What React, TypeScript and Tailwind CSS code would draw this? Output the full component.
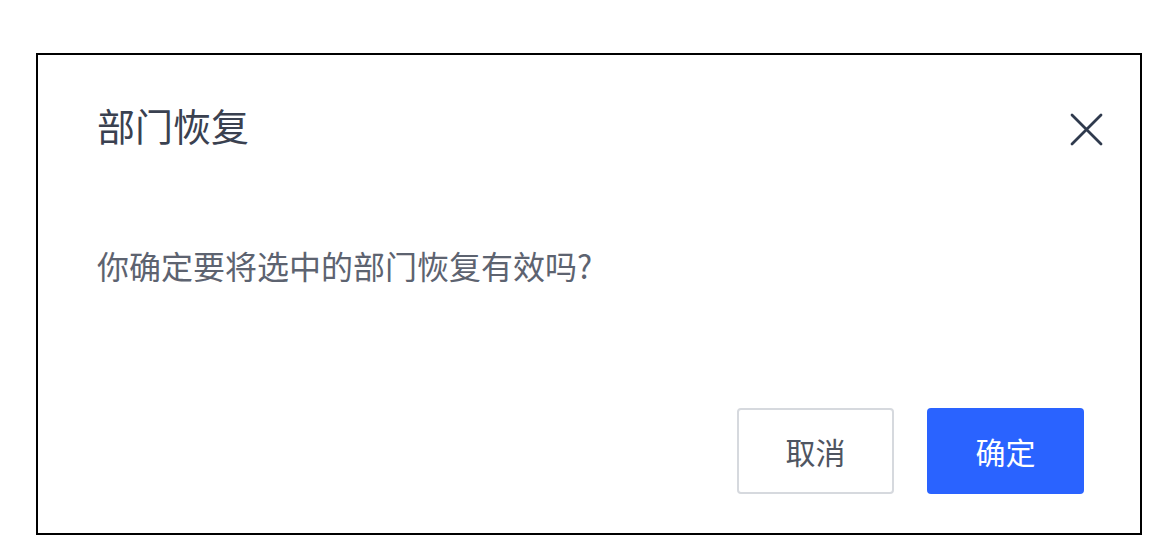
import React from "react";

export default function App() {
  const font = { fontFamily: '"Noto Sans CJK SC", "Noto Sans", sans-serif' };
  return (
    <div className="min-h-[548px] w-[1156px] bg-white pl-[36px] pt-[53px]" style={font}>
      <div className="flex h-[482px] w-[1106px] flex-col border-2 border-black bg-white">
        <div className="flex items-start justify-between pl-[59px] pr-[37px] pt-[51px]">
          <div className="text-[38px] leading-[38px] text-[#3a4150]">部门恢复</div>
          <button className="mt-[7px] flex h-[33px] w-[33px] items-center justify-center" aria-label="关闭">
            <svg width="33" height="33" viewBox="0 0 33 33" fill="none">
              <path d="M2 2 L31 31 M31 2 L2 31" stroke="#2f3a4d" strokeWidth="2.8" strokeLinecap="round" />
            </svg>
          </button>
        </div>
        <div className="pl-[59px] pt-[103px] text-[32px] leading-[32px] text-[#5d6370]">
          你确定要将选中的部门恢复有效吗?
        </div>
        <div className="mt-auto flex justify-end gap-[33px] pb-[39px] pr-[56px]">
          <button className="flex h-[86px] w-[157px] items-center justify-center rounded-[4px] border-2 border-[#d6d9de] bg-white text-[30px] text-[#4f5561]">
            取消
          </button>
          <button className="flex h-[86px] w-[157px] items-center justify-center rounded-[4px] bg-[#2a63ff] text-[30px] text-white">
            确定
          </button>
        </div>
      </div>
    </div>
  );
}
